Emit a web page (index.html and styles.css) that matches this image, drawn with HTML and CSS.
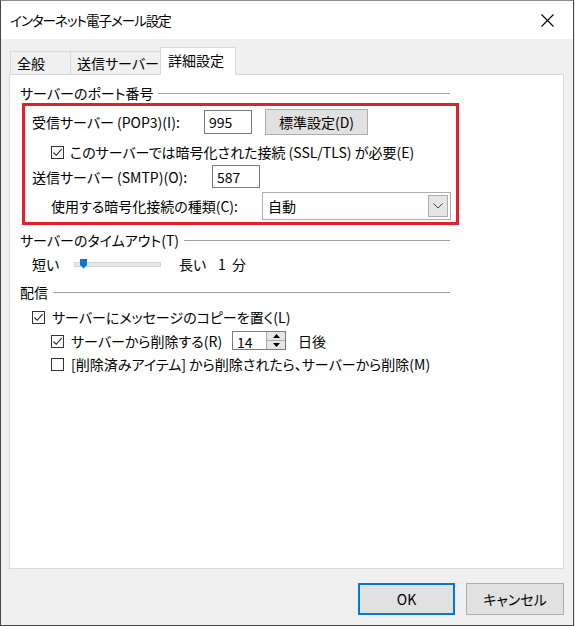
FILE: index.html
```html
<!DOCTYPE html>
<html>
<head>
  <meta charset="utf-8">
  <title>インターネット電子メール設定</title>
  <link rel="stylesheet" href="styles.css">
</head>
<body>
<div class="window">
  <div class="titlebar">
    <span class="title">インターネット電子メール設定</span>
    <span class="close">
      <svg width="13" height="13" viewBox="0 0 13 13"><path d="M0.5 0.5L12.5 12.5M12.5 0.5L0.5 12.5" stroke="#000" stroke-width="1.1" fill="none"/></svg>
    </span>
  </div>

  <div class="client">
    <div class="tabs">
      <div class="tab t1">全般</div>
      <div class="tab t2">送信サーバー</div>
      <div class="tab t3 active">詳細設定</div>
    </div>

    <div class="panel">
      <div class="group-head"><span>サーバーのポート番号</span><i class="rule"></i></div>

      <div class="ports">
        <div class="row r1">
          <span class="lbl w-pop">受信サーバー (POP3)(I):</span>
          <span class="field port">995</span>
          <span class="btn std">標準設定(D)</span>
        </div>
        <div class="row r2 indent">
          <span class="cb checked"><svg width="11" height="11" viewBox="0 0 11 11"><path d="M1.5 5.5L4.2 8.3L9.6 2.2" stroke="#222" stroke-width="1.1" fill="none"/></svg></span>
          <span class="cb-text">このサーバーでは暗号化された接続 (SSL/TLS) が必要(E)</span>
        </div>
        <div class="row r3">
          <span class="lbl w-smtp">送信サーバー (SMTP)(O):</span>
          <span class="field port">587</span>
        </div>
        <div class="row r4 indent">
          <span class="lbl w-enc">使用する暗号化接続の種類(C):</span>
          <span class="select">
            <span class="select-val">自動</span>
            <span class="select-arrow"><svg width="10" height="6" viewBox="0 0 10 6"><path d="M0.5 0.5L5 5L9.5 0.5" stroke="#444" stroke-width="1" fill="none"/></svg></span>
          </span>
        </div>
      </div>

      <div class="group-head g2"><span>サーバーのタイムアウト(T)</span><i class="rule"></i></div>
      <div class="row timeout">
        <span class="lbl w-short">短い</span>
        <span class="slider">
          <span class="track"></span>
          <svg class="thumb" width="8" height="10" viewBox="0 0 8 10"><path d="M0 0H7V6L3.5 9.5L0 6Z" fill="#0078d7"/></svg>
        </span>
        <span class="lbl w-long">長い</span>
        <span>1&nbsp;&nbsp;分</span>
      </div>

      <div class="group-head g3"><span>配信</span><i class="rule"></i></div>
      <div class="row d1">
        <span class="cb checked"><svg width="11" height="11" viewBox="0 0 11 11"><path d="M1.5 5.5L4.2 8.3L9.6 2.2" stroke="#222" stroke-width="1.1" fill="none"/></svg></span>
        <span class="cb-text">サーバーにメッセージのコピーを置く(L)</span>
      </div>
      <div class="row d2">
        <span class="cb checked"><svg width="11" height="11" viewBox="0 0 11 11"><path d="M1.5 5.5L4.2 8.3L9.6 2.2" stroke="#222" stroke-width="1.1" fill="none"/></svg></span>
        <span class="cb-text w-del">サーバーから削除する(R)</span>
        <span class="spin">
          <span class="spin-val">14</span>
          <span class="spin-btns">
            <span class="spin-up"><svg width="7" height="4" viewBox="0 0 7 4"><path d="M0 4L3.5 0L7 4Z" fill="#000"/></svg></span>
            <span class="spin-down"><svg width="7" height="4" viewBox="0 0 7 4"><path d="M0 0L3.5 4L7 0Z" fill="#000"/></svg></span>
          </span>
        </span>
        <span class="days">日後</span>
      </div>
      <div class="row d3">
        <span class="cb"></span>
        <span class="cb-text">[削除済みアイテム] から削除されたら、サーバーから削除(M)</span>
      </div>
    </div>

    <div class="footer">
      <span class="dlg-btn default">OK</span>
      <span class="dlg-btn">キャンセル</span>
    </div>
  </div>
</div>
</body>
</html>
```

FILE: styles.css
```css
html, body {
  margin: 0;
  padding: 0;
}
body {
  width: 575px;
  height: 626px;
  background: #e8e8e8;
  font-family: "Noto Sans CJK JP", "Noto Sans", sans-serif;
  font-feature-settings: "palt";
  font-size: 14px;
  line-height: 18px;
  color: #000;
}
.window {
  box-sizing: border-box;
  width: 574px;
  height: 626px;
  border: 1px solid #474747;
  border-top-color: #8a8a8a;
  background: #f0f0f0;
}
.titlebar {
  height: 38px;
  background: #fff;
  display: flex;
  align-items: center;
  padding-left: 9px;
}
.title {
  flex: 1;
  font-size: 13.5px;
  letter-spacing: -1px;
}
.close {
  width: 13px;
  height: 13px;
  margin-right: 19px;
  display: flex;
}
.client {
  padding: 0 9px 0 8px;
}

/* tabs */
.tabs {
  display: flex;
  align-items: flex-end;
  margin-top: 8px;
  padding-left: 1px;
  height: 27px;
}
.tab {
  box-sizing: border-box;
  height: 23px;
  border: 1px solid #d9d9d9;
  border-bottom: none;
  margin-left: -1px;
  display: flex;
  align-items: center;
  padding-left: 6px;
  background: #f0f0f0;
  white-space: nowrap;
  font-size: 14px;
}
.t1 { margin-left: 0; width: 61px; }
.t2 { width: 91px; }
.t3 { width: 76px; }
.tab.active {
  height: 28px;
  margin-bottom: -1px;
  background: #fff;
  padding-left: 7px;
  padding-bottom: 3px;
  position: relative;
}

/* panel */
.panel {
  box-sizing: border-box;
  width: 555px;
  height: 495px;
  border: 1px solid #d9d9d9;
  background: #fff;
  padding: 9px 0 0 10px;
}
.group-head {
  width: 430px;
  height: 18px;
  display: flex;
  align-items: center;
  white-space: nowrap;
}
.rule {
  flex: 1;
  height: 1px;
  background: #a0a0a0;
  margin-left: 5px;
}
.g2 { margin-top: 6px; }
.g3 { margin-top: 9px; }

.ports {
  box-sizing: border-box;
  width: 437px;
  margin: 1px 0 0 2px;
  border: 3px solid #e0212b;
  padding: 3px 0 2px 7px;
}
.row {
  display: flex;
  align-items: center;
  white-space: nowrap;
}
.indent { margin-left: 19px; }
.r1 { height: 26px; }
.r2 { height: 20px; margin-top: 7px; }
.r3 { height: 23px; margin-top: 3px; }
.r4 { height: 28px; margin-top: 4px; }

.lbl { flex: none; }
.w-pop { width: 172px; }
.w-smtp { width: 180px; }
.w-enc { width: 211px; }
.w-short { width: 42px; }
.w-long { width: 39px; }
.w-del { width: 161px; }

.field {
  box-sizing: border-box;
  height: 24px;
  border: 1px solid #7a7a7a;
  background: #fff;
  padding-left: 4px;
  display: flex;
  align-items: center;
}
.port { width: 48px; }
.r3 .field { height: 23px; }

.btn {
  box-sizing: border-box;
  height: 26px;
  width: 103px;
  margin-left: 13px;
  background: #e1e1e1;
  border: 1px solid #adadad;
  display: flex;
  align-items: center;
  justify-content: center;
}

.select {
  box-sizing: border-box;
  width: 189px;
  height: 28px;
  border: 1px solid #adadad;
  background: #fff;
  display: flex;
  align-items: center;
  padding: 0 2px 0 5px;
}
.select-val { flex: 1; }
.select-arrow {
  box-sizing: border-box;
  width: 20px;
  height: 22px;
  background: #e5e5e5;
  border: 1px solid #adadad;
  display: flex;
  align-items: center;
  justify-content: center;
}

.cb {
  box-sizing: border-box;
  flex: none;
  width: 13px;
  height: 13px;
  border: 1px solid #333;
  background: #fff;
  display: flex;
  align-items: center;
  justify-content: center;
}
.cb-text { margin-left: 6px; }

.timeout {
  height: 20px;
  margin-top: 5px;
  padding-left: 12px;
}
.slider {
  position: relative;
  width: 87px;
  height: 10px;
  margin-right: 18px;
  display: flex;
  align-items: center;
}
.track {
  box-sizing: border-box;
  width: 87px;
  height: 5px;
  background: #e7e7e7;
  border: 1px solid #d6d6d6;
}
.thumb {
  position: absolute;
  left: 6px;
  top: 0;
}

.d1 {
  height: 20px;
  margin-top: 6px;
  padding-left: 12px;
}
.d1 .cb-text { margin-left: 7px; }
.d2 {
  height: 20px;
  margin-top: 4px;
  padding-left: 31px;
}
.d2 .cb-text, .d3 .cb-text { margin-left: 7px; }
.d3 {
  height: 20px;
  margin-top: 3px;
  padding-left: 31px;
}
.spin {
  box-sizing: border-box;
  width: 54px;
  height: 19px;
  border: 1px solid #7a7a7a;
  display: flex;
  margin-top: -2px;
}
.spin-val {
  flex: 1;
  padding-left: 4px;
  line-height: 20px;
}
.spin-btns {
  width: 18px;
  display: flex;
  flex-direction: column;
  border-left: 1px solid #adadad;
}
.spin-up, .spin-down {
  flex: 1;
  background: #e6e6e6;
  display: flex;
  align-items: center;
  justify-content: center;
}
.spin-up { border-bottom: 1px solid #adadad; }
.days { margin-left: 12px; }

/* footer buttons */
.footer {
  display: flex;
  justify-content: flex-end;
  gap: 11px;
  margin-top: 14px;
}
.dlg-btn {
  box-sizing: border-box;
  width: 98px;
  height: 32px;
  background: #e1e1e1;
  border: 1px solid #adadad;
  display: flex;
  align-items: center;
  justify-content: center;
}
.dlg-btn.default {
  width: 97px;
  border: 2px solid #0078d7;
}
```
